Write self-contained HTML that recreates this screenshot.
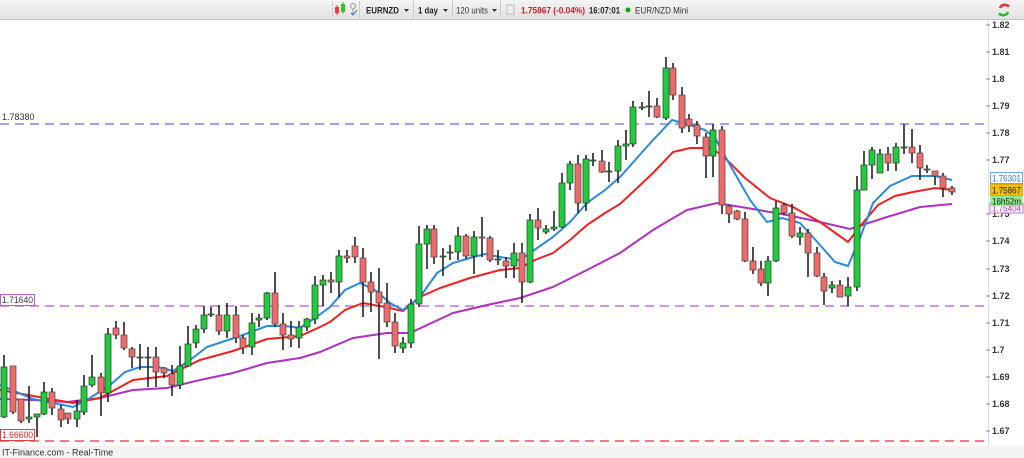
<!DOCTYPE html>
<html><head><meta charset="utf-8"><style>
html,body{margin:0;padding:0;background:#fff;width:1024px;height:458px;overflow:hidden;font-family:"Liberation Sans",sans-serif}
svg{display:block}
.g{fill:#1fcc3c;stroke:#333;stroke-width:.7}
.r{fill:#ef6b6b;stroke:#444;stroke-width:.7}
.w line{stroke:#222;stroke-width:1.6}
text{font-family:"Liberation Sans",sans-serif}
</style></head><body>
<svg width="1024" height="458" viewBox="0 0 1024 458" xmlns="http://www.w3.org/2000/svg">
<defs><linearGradient id="tb" x1="0" y1="0" x2="0" y2="1"><stop offset="0" stop-color="#f5f5f5"/><stop offset="1" stop-color="#e2e2e2"/></linearGradient></defs>
<rect x="0" y="0" width="1024" height="19" fill="url(#tb)"/>
<line x1="0" y1="19.5" x2="1024" y2="19.5" stroke="#c4c4c4"/>
<!-- toolbar -->
<g stroke="#ccc"><line x1="332.5" y1="1" x2="332.5" y2="18"/><line x1="359.5" y1="1" x2="359.5" y2="18"/><line x1="413.5" y1="1" x2="413.5" y2="18"/><line x1="452.5" y1="1" x2="452.5" y2="18"/><line x1="500.5" y1="1" x2="500.5" y2="18"/></g>
<rect x="335" y="7" width="4" height="6" fill="#f33"/><line x1="337" y1="5" x2="337" y2="15" stroke="#f33"/>
<rect x="341" y="4" width="4" height="8" fill="#2c2"/><line x1="343" y1="2" x2="343" y2="14" stroke="#2c2"/>
<circle cx="353" cy="6" r="2.5" fill="none" stroke="#999"/><line x1="353" y1="9" x2="353" y2="15" stroke="#999"/><path d="M351 13 l2 2 l4 -5" stroke="#36c" fill="none"/>
<text x="366" y="13.5" font-size="9.5" font-weight="bold" fill="#222" textLength="33" lengthAdjust="spacingAndGlyphs">EURNZD</text><path d="M404 9 h5 l-2.5 3z" fill="#333"/>
<text x="418" y="13.5" font-size="9.5" font-weight="bold" fill="#222" textLength="20" lengthAdjust="spacingAndGlyphs">1 day</text><path d="M443 9 h5 l-2.5 3z" fill="#333"/>
<text x="456" y="13.5" font-size="9" fill="#333" textLength="32" lengthAdjust="spacingAndGlyphs">120 units</text><path d="M492 9 h5 l-2.5 3z" fill="#333"/>
<rect x="507" y="5" width="7" height="9" fill="#eee" stroke="#bbb"/>
<text x="521" y="13.5" font-size="9" font-weight="bold" fill="#d0202a" textLength="64" lengthAdjust="spacingAndGlyphs">1.75867 (-0.04%)</text>
<text x="589" y="13.5" font-size="9" font-weight="bold" fill="#222" textLength="31" lengthAdjust="spacingAndGlyphs">16:07:01</text>
<circle cx="628" cy="10" r="2.5" fill="#1a1"/>
<text x="635" y="13.5" font-size="9" fill="#333" textLength="53" lengthAdjust="spacingAndGlyphs">EUR/NZD Mini</text>
<path d="M1000 8 a5 5 0 0 1 8 -2" stroke="#e33" stroke-width="2.5" fill="none"/><path d="M1008 12 a5 5 0 0 1 -8 2" stroke="#2b2" stroke-width="2.5" fill="none"/>
<path d="M1006 4 l4 1 l-2 3z" fill="#e33"/><path d="M1002 16 l-4 -1 l2 -3z" fill="#2b2"/>
<!-- axis -->
<line x1="988.5" y1="20" x2="988.5" y2="446" stroke="#ddd"/>
<g font-size="9" font-weight="bold" fill="#333">
<text x="992" y="28">1.82</text><text x="992" y="55">1.81</text><text x="992" y="82">1.8</text><text x="992" y="109">1.79</text><text x="992" y="136">1.78</text><text x="992" y="163">1.77</text><text x="992" y="217">1.75</text><text x="992" y="244">1.74</text><text x="992" y="272">1.73</text><text x="992" y="299">1.72</text><text x="992" y="326">1.71</text><text x="992" y="353">1.7</text><text x="992" y="380">1.69</text><text x="992" y="407">1.68</text><text x="992" y="434">1.67</text>
</g>
<g stroke="#888"><line x1="986" y1="25" x2="990" y2="25"/><line x1="986" y1="52" x2="990" y2="52"/><line x1="986" y1="79" x2="990" y2="79"/><line x1="986" y1="106" x2="990" y2="106"/><line x1="986" y1="133" x2="990" y2="133"/><line x1="986" y1="160" x2="990" y2="160"/><line x1="986" y1="214" x2="990" y2="214"/><line x1="986" y1="241" x2="990" y2="241"/><line x1="986" y1="269" x2="990" y2="269"/><line x1="986" y1="296" x2="990" y2="296"/><line x1="986" y1="323" x2="990" y2="323"/><line x1="986" y1="350" x2="990" y2="350"/><line x1="986" y1="377" x2="990" y2="377"/><line x1="986" y1="404" x2="990" y2="404"/><line x1="986" y1="431" x2="990" y2="431"/></g>
<!-- dashed levels -->
<line x1="0" y1="124" x2="986" y2="124" stroke="#8080f0" stroke-width="1.5" stroke-dasharray="9 6"/>
<line x1="0" y1="306" x2="986" y2="306" stroke="#c070e0" stroke-width="1.5" stroke-dasharray="9 6"/>
<line x1="0" y1="441" x2="986" y2="441" stroke="#f05050" stroke-width="1.5" stroke-dasharray="9 6"/>
<text x="2" y="120" font-size="9" fill="#333">1.78380</text>
<rect x="0.5" y="294.5" width="34" height="11" fill="#fff" stroke="#b060d0"/><text x="2" y="303" font-size="9" fill="#333" textLength="31" lengthAdjust="spacingAndGlyphs">1.71640</text>
<rect x="0.5" y="429.5" width="34" height="11" fill="#fff" stroke="#e04040"/><text x="2" y="438" font-size="9" fill="#e02020" textLength="31" lengthAdjust="spacingAndGlyphs">1.66600</text>
<!-- purple MA -->
<polyline fill="none" stroke="#b030c0" stroke-width="2" points="0,399 33,400 67,402 100,398 133,390 167,388 200,380 233,373 267,363 300,358 320,352 353,338 387,333 410,333 453,313 487,305 520,298 553,287 587,270 620,253 653,230 687,210 717,203 753,209 787,215 820,222 850,229 887,217 920,207 952,204"/>
<!-- red MA -->
<polyline fill="none" stroke="#f02020" stroke-width="2" points="0,390 50,399 73,403 100,398 133,380 167,376 200,360 233,351 267,339 300,336 320,327 330,322 345,310 363,303 385,307 403,311 420,297 440,288 470,278 500,270 520,268 535,260 553,253 570,240 587,225 605,213 620,204 635,190 653,173 673,152 690,148 710,148 722,155 745,178 770,198 793,207 820,222 848,242 862,224 878,205 895,196 913,192 935,188 952,190"/>
<!-- blue MA -->
<polyline fill="none" stroke="#2a8ae0" stroke-width="2" points="0,385 33,399 73,407 90,398 110,385 125,372 140,367 158,367 173,371 190,360 207,347 240,336 267,326 285,326 300,328 315,318 330,307 345,290 360,283 375,290 390,303 403,310 420,297 437,273 453,263 470,258 485,254 500,257 520,260 530,253 553,237 570,222 587,203 605,190 620,177 637,158 653,140 672,120 690,125 705,130 715,138 730,165 750,200 767,222 782,218 800,223 820,245 835,262 848,266 860,238 873,203 890,186 912,176 935,176 952,180"/>
<!-- candles -->
<g class="w">
<line x1="4" y1="355" x2="4" y2="418"/><line x1="13" y1="366" x2="13" y2="414"/><line x1="21" y1="399" x2="21" y2="423"/><line x1="29" y1="386" x2="29" y2="423"/><line x1="37" y1="414" x2="37" y2="437"/><line x1="44" y1="382" x2="44" y2="415"/><line x1="52" y1="388" x2="52" y2="415"/><line x1="61" y1="405" x2="61" y2="427"/><line x1="68" y1="413" x2="68" y2="424"/><line x1="77" y1="400" x2="77" y2="427"/><line x1="84" y1="375" x2="84" y2="415"/><line x1="92" y1="355" x2="92" y2="387"/><line x1="101" y1="373" x2="101" y2="416"/><line x1="108" y1="328" x2="108" y2="402"/><line x1="116" y1="321" x2="116" y2="339"/><line x1="124" y1="322" x2="124" y2="350"/><line x1="132" y1="347" x2="132" y2="368"/><line x1="140" y1="344" x2="140" y2="370"/><line x1="148" y1="347" x2="148" y2="387"/><line x1="156" y1="347" x2="156" y2="387"/><line x1="164" y1="367" x2="164" y2="378"/><line x1="172" y1="365" x2="172" y2="396"/><line x1="180" y1="346" x2="180" y2="389"/><line x1="188" y1="326" x2="188" y2="367"/><line x1="196" y1="325" x2="196" y2="348"/><line x1="204" y1="306" x2="204" y2="333"/><line x1="211" y1="307" x2="211" y2="317"/><line x1="219" y1="305" x2="219" y2="335"/><line x1="227" y1="303" x2="227" y2="338"/><line x1="236" y1="306" x2="236" y2="343"/><line x1="243" y1="335" x2="243" y2="354"/><line x1="252" y1="313" x2="252" y2="355"/><line x1="259" y1="314" x2="259" y2="327"/><line x1="267" y1="292" x2="267" y2="320"/><line x1="275" y1="272" x2="275" y2="327"/><line x1="283" y1="313" x2="283" y2="350"/><line x1="291" y1="321" x2="291" y2="347"/><line x1="299" y1="321" x2="299" y2="348"/><line x1="307" y1="318" x2="307" y2="331"/><line x1="315" y1="276" x2="315" y2="324"/><line x1="323" y1="275" x2="323" y2="306"/><line x1="331" y1="272" x2="331" y2="293"/><line x1="339" y1="250" x2="339" y2="297"/><line x1="347" y1="250" x2="347" y2="263"/><line x1="355" y1="237" x2="355" y2="263"/><line x1="363" y1="248" x2="363" y2="317"/><line x1="371" y1="272" x2="371" y2="312"/><line x1="379" y1="268" x2="379" y2="359"/><line x1="387" y1="283" x2="387" y2="327"/><line x1="395" y1="313" x2="395" y2="353"/><line x1="403" y1="337" x2="403" y2="353"/><line x1="411" y1="299" x2="411" y2="348"/><line x1="419" y1="226" x2="419" y2="307"/><line x1="427" y1="225" x2="427" y2="269"/><line x1="434" y1="225" x2="434" y2="264"/><line x1="443" y1="248" x2="443" y2="276"/><line x1="450" y1="245" x2="450" y2="260"/><line x1="458" y1="227" x2="458" y2="260"/><line x1="466" y1="234" x2="466" y2="259"/><line x1="474" y1="231" x2="474" y2="274"/><line x1="482" y1="217" x2="482" y2="257"/><line x1="490" y1="236" x2="490" y2="262"/><line x1="498" y1="250" x2="498" y2="265"/><line x1="506" y1="257" x2="506" y2="278"/><line x1="514" y1="243" x2="514" y2="278"/><line x1="522" y1="243" x2="522" y2="303"/><line x1="530" y1="214" x2="530" y2="283"/><line x1="538" y1="208" x2="538" y2="240"/><line x1="546" y1="225" x2="546" y2="234"/><line x1="554" y1="211" x2="554" y2="231"/><line x1="562" y1="173" x2="562" y2="228"/><line x1="570" y1="161" x2="570" y2="190"/><line x1="578" y1="155" x2="578" y2="213"/><line x1="586" y1="155" x2="586" y2="211"/><line x1="593" y1="153" x2="593" y2="166"/><line x1="602" y1="150" x2="602" y2="173"/><line x1="609" y1="162" x2="609" y2="182"/><line x1="618" y1="140" x2="618" y2="183"/><line x1="626" y1="130" x2="626" y2="160"/><line x1="633" y1="101" x2="633" y2="147"/><line x1="642" y1="102" x2="642" y2="110"/><line x1="649" y1="91" x2="649" y2="117"/><line x1="657" y1="98" x2="657" y2="118"/><line x1="666" y1="57" x2="666" y2="120"/><line x1="673" y1="63" x2="673" y2="100"/><line x1="682" y1="87" x2="682" y2="133"/><line x1="689" y1="114" x2="689" y2="132"/><line x1="697" y1="121" x2="697" y2="144"/><line x1="706" y1="133" x2="706" y2="178"/><line x1="713" y1="124" x2="713" y2="177"/><line x1="722" y1="126" x2="722" y2="214"/><line x1="729" y1="205" x2="729" y2="223"/><line x1="737" y1="210" x2="737" y2="220"/><line x1="745" y1="212" x2="745" y2="262"/><line x1="753" y1="247" x2="753" y2="274"/><line x1="761" y1="261" x2="761" y2="286"/><line x1="768" y1="256" x2="768" y2="296"/><line x1="776" y1="201" x2="776" y2="262"/><line x1="784" y1="203" x2="784" y2="215"/><line x1="792" y1="204" x2="792" y2="238"/><line x1="800" y1="227" x2="800" y2="245"/><line x1="808" y1="229" x2="808" y2="277"/><line x1="817" y1="247" x2="817" y2="277"/><line x1="824" y1="273" x2="824" y2="305"/><line x1="832" y1="281" x2="832" y2="293"/><line x1="840" y1="280" x2="840" y2="297"/><line x1="848" y1="277" x2="848" y2="306"/><line x1="857" y1="176" x2="857" y2="291"/><line x1="864" y1="151" x2="864" y2="190"/><line x1="872" y1="147" x2="872" y2="179"/><line x1="880" y1="149" x2="880" y2="173"/><line x1="888" y1="147" x2="888" y2="171"/><line x1="896" y1="143" x2="896" y2="171"/><line x1="904" y1="124" x2="904" y2="154"/><line x1="912" y1="129" x2="912" y2="163"/><line x1="920" y1="145" x2="920" y2="180"/><line x1="927" y1="165" x2="927" y2="173"/><line x1="935" y1="171" x2="935" y2="185"/><line x1="943" y1="173" x2="943" y2="197"/><line x1="952" y1="186" x2="952" y2="195"/>
</g>
<g>
<rect class="g" x="1" y="367" width="6" height="50"/><rect class="r" x="10" y="366" width="6" height="46"/><rect class="r" x="18" y="399" width="6" height="22"/><rect class="g" x="26" y="417" width="6" height="2"/><rect class="g" x="34" y="414" width="6" height="3"/><rect class="g" x="41" y="392" width="6" height="22"/><rect class="r" x="49" y="392" width="6" height="16"/><rect class="r" x="58" y="409" width="6" height="11"/><rect class="r" x="65" y="413" width="6" height="6"/><rect class="g" x="74" y="411" width="6" height="8"/><rect class="g" x="81" y="386" width="6" height="26"/><rect class="g" x="89" y="377" width="6" height="8"/><rect class="r" x="98" y="377" width="6" height="16"/><rect class="g" x="105" y="334" width="6" height="59"/><rect class="r" x="113" y="328" width="6" height="7"/><rect class="r" x="121" y="335" width="6" height="13"/><rect class="r" x="129" y="349" width="6" height="8"/><rect class="g" x="137" y="357" width="6" height="1"/><rect class="g" x="145" y="357" width="6" height="1"/><rect class="r" x="153" y="357" width="6" height="15"/><rect class="r" x="161" y="368" width="6" height="5"/><rect class="r" x="169" y="374" width="6" height="11"/><rect class="g" x="177" y="366" width="6" height="19"/><rect class="g" x="185" y="344" width="6" height="22"/><rect class="g" x="193" y="329" width="6" height="14"/><rect class="g" x="201" y="315" width="6" height="14"/><rect class="g" x="208" y="314" width="6" height="1"/><rect class="r" x="216" y="315" width="6" height="16"/><rect class="g" x="224" y="315" width="6" height="16"/><rect class="r" x="233" y="315" width="6" height="23"/><rect class="r" x="240" y="338" width="6" height="10"/><rect class="g" x="249" y="323" width="6" height="24"/><rect class="g" x="256" y="318" width="6" height="2"/><rect class="g" x="264" y="293" width="6" height="25"/><rect class="r" x="272" y="293" width="6" height="31"/><rect class="r" x="280" y="324" width="6" height="11"/><rect class="r" x="288" y="335" width="6" height="4"/><rect class="g" x="296" y="327" width="6" height="11"/><rect class="g" x="304" y="319" width="6" height="8"/><rect class="g" x="312" y="285" width="6" height="34"/><rect class="g" x="320" y="280" width="6" height="5"/><rect class="r" x="328" y="280" width="6" height="2"/><rect class="g" x="336" y="256" width="6" height="26"/><rect class="r" x="344" y="256" width="6" height="2"/><rect class="r" x="352" y="246" width="6" height="11"/><rect class="r" x="360" y="258" width="6" height="24"/><rect class="r" x="368" y="282" width="6" height="10"/><rect class="r" x="376" y="292" width="6" height="11"/><rect class="r" x="384" y="303" width="6" height="19"/><rect class="r" x="392" y="322" width="6" height="24"/><rect class="g" x="400" y="343" width="6" height="5"/><rect class="g" x="408" y="304" width="6" height="39"/><rect class="g" x="416" y="244" width="6" height="60"/><rect class="g" x="424" y="229" width="6" height="15"/><rect class="r" x="431" y="229" width="6" height="28"/><rect class="g" x="440" y="256" width="6" height="1"/><rect class="g" x="447" y="252" width="6" height="1"/><rect class="g" x="455" y="236" width="6" height="16"/><rect class="r" x="463" y="236" width="6" height="20"/><rect class="g" x="471" y="237" width="6" height="19"/><rect class="r" x="479" y="237" width="6" height="1"/><rect class="r" x="487" y="238" width="6" height="22"/><rect class="g" x="495" y="259" width="6" height="1"/><rect class="r" x="503" y="261" width="6" height="5"/><rect class="g" x="511" y="253" width="6" height="13"/><rect class="r" x="519" y="253" width="6" height="29"/><rect class="g" x="527" y="220" width="6" height="62"/><rect class="r" x="535" y="220" width="6" height="8"/><rect class="g" x="543" y="229" width="6" height="3"/><rect class="g" x="551" y="227" width="6" height="2"/><rect class="g" x="559" y="183" width="6" height="44"/><rect class="g" x="567" y="164" width="6" height="19"/><rect class="r" x="575" y="164" width="6" height="39"/><rect class="g" x="583" y="159" width="6" height="44"/><rect class="g" x="590" y="160" width="6" height="1"/><rect class="r" x="599" y="161" width="6" height="11"/><rect class="g" x="606" y="171" width="6" height="1"/><rect class="g" x="615" y="146" width="6" height="25"/><rect class="g" x="623" y="144" width="6" height="2"/><rect class="g" x="630" y="107" width="6" height="37"/><rect class="g" x="639" y="107" width="6" height="1"/><rect class="g" x="646" y="106" width="6" height="1"/><rect class="r" x="654" y="106" width="6" height="11"/><rect class="g" x="663" y="68" width="6" height="50"/><rect class="r" x="670" y="68" width="6" height="27"/><rect class="r" x="679" y="95" width="6" height="33"/><rect class="r" x="686" y="119" width="6" height="7"/><rect class="r" x="694" y="125" width="6" height="11"/><rect class="r" x="703" y="137" width="6" height="19"/><rect class="g" x="710" y="130" width="6" height="26"/><rect class="r" x="719" y="130" width="6" height="75"/><rect class="r" x="726" y="206" width="6" height="8"/><rect class="r" x="734" y="211" width="6" height="8"/><rect class="r" x="742" y="219" width="6" height="42"/><rect class="r" x="750" y="261" width="6" height="9"/><rect class="r" x="758" y="269" width="6" height="14"/><rect class="g" x="765" y="261" width="6" height="22"/><rect class="g" x="773" y="208" width="6" height="53"/><rect class="r" x="781" y="205" width="6" height="8"/><rect class="r" x="789" y="213" width="6" height="23"/><rect class="g" x="797" y="233" width="6" height="4"/><rect class="r" x="805" y="233" width="6" height="20"/><rect class="r" x="814" y="253" width="6" height="23"/><rect class="r" x="821" y="277" width="6" height="14"/><rect class="g" x="829" y="285" width="6" height="3"/><rect class="r" x="837" y="285" width="6" height="12"/><rect class="g" x="845" y="287" width="6" height="9"/><rect class="g" x="854" y="190" width="6" height="97"/><rect class="g" x="861" y="165" width="6" height="25"/><rect class="g" x="869" y="150" width="6" height="15"/><rect class="g" x="877" y="154" width="6" height="19"/><rect class="r" x="885" y="154" width="6" height="9"/><rect class="g" x="893" y="147" width="6" height="16"/><rect class="g" x="901" y="147" width="6" height="1"/><rect class="r" x="909" y="147" width="6" height="6"/><rect class="r" x="917" y="153" width="6" height="15"/><rect class="r" x="924" y="169" width="6" height="1"/><rect class="r" x="932" y="171" width="6" height="5"/><rect class="r" x="940" y="176" width="6" height="12"/><rect class="r" x="949" y="188" width="6" height="4"/>
</g>
<!-- right price tags -->
<rect x="990" y="203" width="33" height="10" fill="#fff" stroke="#c070e0"/><text x="992" y="211.5" font-size="9" fill="#b030c0" textLength="29" lengthAdjust="spacingAndGlyphs">1.75404</text>
<rect x="990.5" y="172.5" width="32" height="11" fill="#fff" stroke="#6aa8e8"/><text x="992" y="181.5" font-size="9" fill="#2a7ad0" textLength="29" lengthAdjust="spacingAndGlyphs">1.76301</text>
<rect x="990.5" y="184.5" width="32" height="11" fill="#f5c000" stroke="#e0a800"/><text x="992" y="193.5" font-size="9" fill="#222" textLength="29" lengthAdjust="spacingAndGlyphs">1.75867</text>
<rect x="990.5" y="196" width="32" height="10" fill="#8ee88e"/><text x="992" y="204.5" font-size="9" fill="#222" textLength="29" lengthAdjust="spacingAndGlyphs">16h52m</text>
<!-- footer -->
<rect x="0" y="446" width="1024" height="12" fill="#f3f3f3"/>
<text x="2" y="455.5" font-size="9" fill="#333">IT-Finance.com - Real-Time</text>
</svg>
</body></html>
